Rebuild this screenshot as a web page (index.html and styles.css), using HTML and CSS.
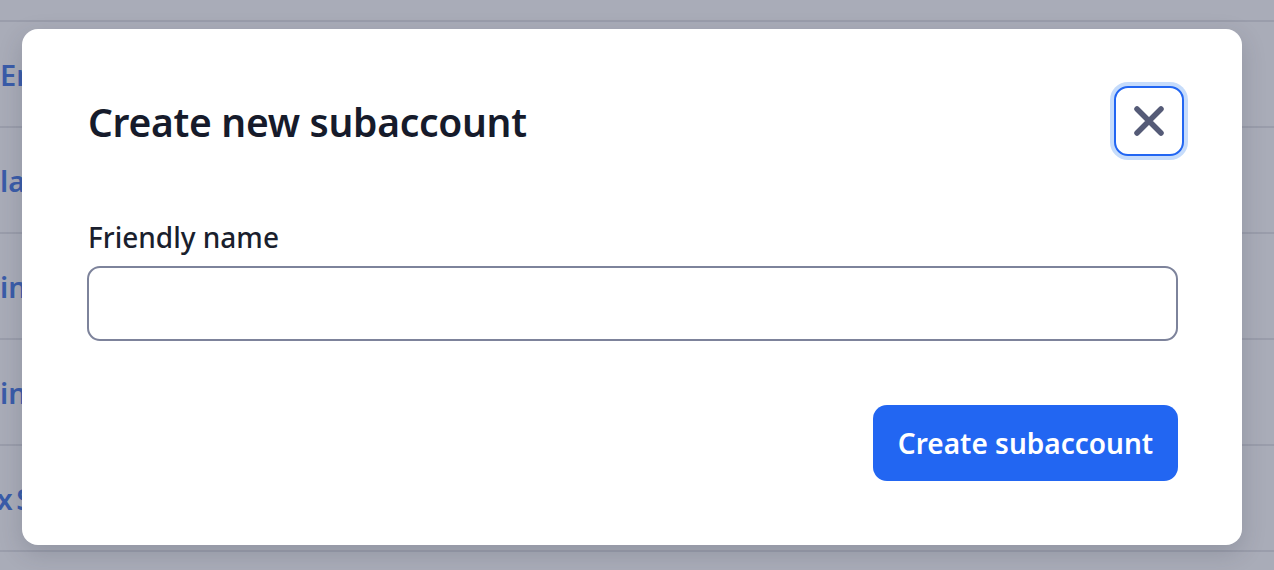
FILE: index.html
```html
<!DOCTYPE html>
<html lang="en">
<head>
<meta charset="utf-8">
<title>Create new subaccount</title>
<link rel="stylesheet" href="styles.css">
</head>
<body>
<div class="page">
  <div class="row row-top"></div>
  <div class="row"><span class="cell">Enterprise</span></div>
  <div class="row"><span class="cell">labels</span></div>
  <div class="row"><span class="cell">ingest</span></div>
  <div class="row"><span class="cell">ingress</span></div>
  <div class="row"><span class="cell cell-xs">Box Store</span></div>
  <div class="row row-last"></div>
</div>

<div class="modal" role="dialog" aria-labelledby="modal-title">
  <div class="modal-header">
    <h1 id="modal-title" class="modal-title">Create new subaccount</h1>
    <button class="close-btn" aria-label="Close">
      <svg viewBox="0 0 32 32" width="32" height="32" aria-hidden="true">
        <path d="M4 4 L28 28 M28 4 L4 28" stroke="#555b77" stroke-width="5.5" stroke-linecap="round" fill="none"/>
      </svg>
    </button>
  </div>
  <div class="field">
    <label class="field-label" for="friendly">Friendly name</label>
    <input id="friendly" class="field-input" type="text">
  </div>
  <div class="modal-footer">
    <button class="primary-btn">Create subaccount</button>
  </div>
</div>
</body>
</html>
```

FILE: styles.css
```css
html, body {
  margin: 0;
  padding: 0;
  height: 100%;
  overflow: hidden;
}

body {
  background: #a9acb8;
  font-family: "Noto Sans", "Open Sans", sans-serif;
}

.page {
  display: flex;
  flex-direction: column;
}

.row {
  height: 104px;
  border-bottom: 2px solid #9a9dab;
  display: flex;
  align-items: center;
  overflow: hidden;
  white-space: nowrap;
}

.row-top {
  height: 20px;
}

.row-last {
  height: 14px;
  border-bottom: none;
}

.cell {
  font-size: 29px;
  font-weight: 600;
  color: #3a5ca9;
  margin-left: 0;
}

.cell-xs {
  margin-left: -40px;
  word-spacing: -4px;
}

.modal {
  position: absolute;
  left: 22px;
  top: 29px;
  width: 1220px;
  height: 516px;
  box-sizing: border-box;
  background: #ffffff;
  border-radius: 16px;
  padding: 57px 64px 64px 65px;
  display: flex;
  flex-direction: column;
  box-shadow: 0 8px 24px rgba(40, 44, 60, 0.18);
}

.modal-header {
  display: flex;
  align-items: center;
  justify-content: space-between;
}

.modal-title {
  margin: 0 0 0 1px;
  font-size: 39px;
  font-weight: 600;
  color: #161b2b;
  letter-spacing: -0.3px;
}

.close-btn {
  width: 70px;
  height: 70px;
  margin-right: -6px;
  box-sizing: border-box;
  border: 2px solid #2266f2;
  border-radius: 14px;
  background: #ffffff;
  box-shadow: 0 0 0 4px #c6dcfb;
  display: flex;
  align-items: center;
  justify-content: center;
  padding: 0;
  cursor: pointer;
}

.field {
  display: flex;
  flex-direction: column;
  margin-top: 63px;
}

.field-label {
  font-size: 28px;
  font-weight: 500;
  color: #1a1f2e;
  margin-left: 1px;
  line-height: 36px;
}

.field-input {
  margin-top: 11px;
  height: 75px;
  box-sizing: border-box;
  border: 2px solid #7d839b;
  border-radius: 13px;
  background: #ffffff;
  font-family: inherit;
  font-size: 26px;
  padding: 0 18px;
  outline: none;
}

.modal-footer {
  margin-top: auto;
  display: flex;
  justify-content: flex-end;
}

.primary-btn {
  width: 305px;
  height: 76px;
  border: none;
  border-radius: 14px;
  background: #2266f2;
  color: #ffffff;
  font-family: inherit;
  font-size: 28px;
  font-weight: 600;
  cursor: pointer;
}
```
